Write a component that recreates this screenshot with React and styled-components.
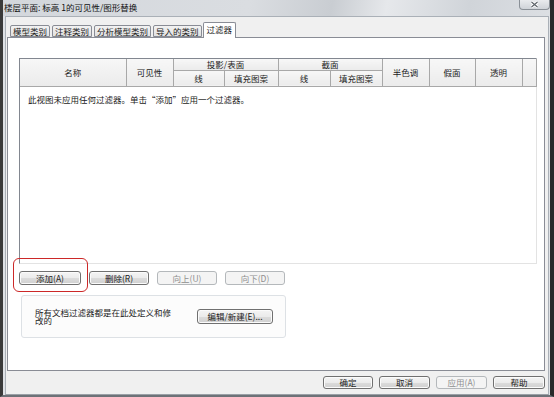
import React from "react";
import styled, { createGlobalStyle } from "styled-components";

const GlobalStyle = createGlobalStyle`
  html, body {
    margin: 0;
    padding: 0;
    background: #2c2c2c;
  }
  body {
    font-family: "Noto Sans CJK SC", "Noto Sans", sans-serif;
    font-size: 8.5px;
    color: #1b1b1b;
  }
`;

const Window = styled.div`
  width: 554px;
  height: 397px;
  box-sizing: border-box;
  display: flex;
  flex-direction: column;
  background: #dfe2e6;
  border-left: 3px solid #3a3a3a;
  border-right: 4px solid #2a2a2a;
  border-bottom: 2px solid #6d7278;
`;

const TitleBar = styled.div`
  height: 16px;
  flex-shrink: 0;
  display: flex;
  align-items: flex-start;
  background: linear-gradient(
    100deg,
    #d3d7dc 0%,
    #dadde1 45%,
    #c9cdd2 60%,
    #e6e8eb 70%,
    #d0d4d9 85%,
    #dcdfe3 100%
  );
`;

const TitleText = styled.div`
  flex: 1;
  padding: 2px 0 0 1px;
  line-height: 10px;
  color: #111;
  white-space: nowrap;
`;

const CloseButton = styled.div`
  width: 31px;
  height: 10px;
  box-sizing: border-box;
  border: 1px solid #8a9097;
  border-top: none;
  border-radius: 0 0 4px 4px;
  background: linear-gradient(#e9ebee, #cfd3d8);
  display: flex;
  align-items: center;
  justify-content: center;
`;

const Client = styled.div`
  flex: 1;
  display: flex;
  flex-direction: column;
  margin: 0 1px 0 2px;
  padding: 5px 3px 5px 1px;
  background: #f0f0f0;
  border: 1px solid #aab0b7;
  border-bottom: 1px solid #9aa0a6;
`;

const TabStrip = styled.div`
  display: flex;
  align-items: flex-end;
  height: 15px;
  padding-left: 3px;
  position: relative;
  z-index: 1;
`;

const Tab = styled.div`
  box-sizing: border-box;
  height: ${(p) => (p.$active ? "16px" : "12px")};
  padding: 0 ${(p) => (p.$active ? "3px" : "2px")};
  margin-right: ${(p) => (p.$active ? "0" : "2px")};
  margin-bottom: ${(p) => (p.$active ? "-1px" : "0")};
  margin-left: ${(p) => (p.$active ? "-1px" : "0")};
  border: 1px solid #898c95;
  border-bottom: ${(p) => (p.$active ? "none" : "1px solid #898c95")};
  border-radius: 2px 2px 0 0;
  background: ${(p) =>
    p.$active ? "#ffffff" : "linear-gradient(#f2f2f2, #e1e1e1)"};
  line-height: ${(p) => (p.$active ? "13px" : "10px")};
  white-space: nowrap;
`;

const Panel = styled.div`
  height: 334px;
  box-sizing: border-box;
  display: flex;
  flex-direction: column;
  padding: 20px 7px 0 11px;
  background: #ffffff;
  border: 1px solid #898c95;
`;

const TableBox = styled.div`
  height: 206px;
  box-sizing: border-box;
  border-top: 1px solid #828790;
  border-left: 1px solid #828790;
  border-right: 1px solid #e3e3e3;
  border-bottom: 1px solid #e3e3e3;
  background: #ffffff;
`;

const HeaderTable = styled.table`
  width: 516px;
  table-layout: fixed;
  border-collapse: collapse;
`;

const HeadCell = styled.th`
  box-sizing: border-box;
  height: ${(p) => (p.$short ? "11px" : "16px")};
  padding: 0;
  font-weight: normal;
  text-align: center;
  line-height: 9px;
  background: linear-gradient(#f7f7f7, #ebebeb);
  border: 1px solid #a8a8a8;
  border-top: none;
  white-space: nowrap;
  overflow: hidden;
  &:first-child {
    border-left: none;
  }
`;

const Message = styled.div`
  padding: 7px 0 0 8px;
  line-height: 10px;
`;

const ButtonRow = styled.div`
  position: relative;
  display: flex;
  gap: 8px;
  margin-top: 7px;
`;

const Button = styled.div`
  box-sizing: border-box;
  width: ${(p) => p.$w}px;
  height: ${(p) => p.$h || 14}px;
  display: flex;
  align-items: center;
  justify-content: center;
  border: 1px solid ${(p) => (p.$disabled ? "#b4b8bb" : "#707070")};
  border-radius: 3px;
  background: ${(p) =>
    p.$disabled ? "#f4f4f4" : "linear-gradient(#f4f4f4 0%, #ebebeb 50%, #dcdcdc 51%, #d0d0d0 100%)"};
  color: ${(p) => (p.$disabled ? "#8f8f8f" : "#1b1b1b")};
  box-shadow: ${(p) => (p.$disabled ? "none" : "inset 0 0 0 1px #fbfbfb")};
  white-space: nowrap;
  line-height: 9px;
`;

const Highlight = styled.div`
  position: absolute;
  left: -6px;
  top: -13px;
  width: 75px;
  height: 34px;
  box-sizing: border-box;
  border: 1.5px solid #cc2828;
  border-radius: 6px;
  pointer-events: none;
`;

const GroupBox = styled.div`
  width: 265px;
  height: 43px;
  box-sizing: border-box;
  margin: 10px 0 0 2px;
  padding-left: 13px;
  display: flex;
  align-items: center;
  border: 1px solid #dde1e5;
  border-radius: 3px;
  background: #fcfcfc;
`;

const GroupText = styled.div`
  width: 140px;
  line-height: 8px;
  margin-top: -1px;
`;

const EditButton = styled(Button)`
  margin-left: 22px;
  margin-top: -1px;
`;

const Footer = styled.div`
  display: flex;
  justify-content: flex-end;
  gap: 6px;
  margin-top: 5px;
`;

const columns = [106, 47, 51, 54, 52, 52, 47, 46, 47, 14];

export default function App() {
  return (
    <>
      <GlobalStyle />
      <Window>
        <TitleBar>
          <TitleText>楼层平面: 标高 1的可见性/图形替换</TitleText>
          <CloseButton>
            <svg width="9" height="7" viewBox="0 0 9 7">
              <path d="M1.5 1 L7.5 6 M7.5 1 L1.5 6" stroke="#ffffff" strokeWidth="3" />
              <path d="M1.5 1 L7.5 6 M7.5 1 L1.5 6" stroke="#5d636a" strokeWidth="1.2" />
            </svg>
          </CloseButton>
        </TitleBar>
        <Client>
          <TabStrip>
            <Tab>模型类别</Tab>
            <Tab>注释类别</Tab>
            <Tab>分析模型类别</Tab>
            <Tab>导入的类别</Tab>
            <Tab $active>过滤器</Tab>
          </TabStrip>
          <Panel>
            <TableBox>
              <HeaderTable>
                <colgroup>
                  {columns.map((w, i) => (
                    <col key={i} style={{ width: w }} />
                  ))}
                </colgroup>
                <thead>
                  <tr>
                    <HeadCell rowSpan={2}>名称</HeadCell>
                    <HeadCell rowSpan={2}>可见性</HeadCell>
                    <HeadCell $short colSpan={2}>投影/表面</HeadCell>
                    <HeadCell $short colSpan={2}>截面</HeadCell>
                    <HeadCell rowSpan={2}>半色调</HeadCell>
                    <HeadCell rowSpan={2}>假面</HeadCell>
                    <HeadCell rowSpan={2}>透明</HeadCell>
                    <HeadCell rowSpan={2}></HeadCell>
                  </tr>
                  <tr>
                    <HeadCell>线</HeadCell>
                    <HeadCell>填充图案</HeadCell>
                    <HeadCell>线</HeadCell>
                    <HeadCell>填充图案</HeadCell>
                  </tr>
                </thead>
              </HeaderTable>
              <Message>此视图未应用任何过滤器。单击“添加”应用一个过滤器。</Message>
            </TableBox>
            <ButtonRow>
              <Button $w={62}>添加(A)</Button>
              <Button $w={60}>删除(R)</Button>
              <Button $w={60} $disabled>向上(U)</Button>
              <Button $w={60} $disabled>向下(D)</Button>
              <Highlight />
            </ButtonRow>
            <GroupBox>
              <GroupText>所有文档过滤器都是在此处定义和修改的</GroupText>
              <EditButton $w={76} $h={15}>编辑/新建(E)...</EditButton>
            </GroupBox>
          </Panel>
          <Footer>
            <Button $w={50} $h={13}>确定</Button>
            <Button $w={51} $h={13}>取消</Button>
            <Button $w={51} $h={13} $disabled>应用(A)</Button>
            <Button $w={52} $h={13}>帮助</Button>
          </Footer>
        </Client>
      </Window>
    </>
  );
}
